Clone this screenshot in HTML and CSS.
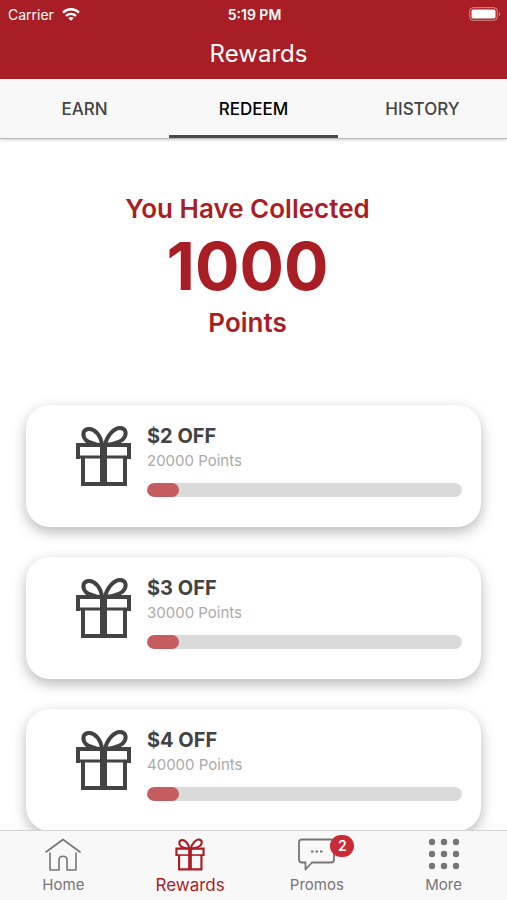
FILE: index.html
```html
<!DOCTYPE html>
<html lang="en">
<head>
    <meta charset="UTF-8">
    <meta name="viewport" content="width=device-width, initial-scale=1.0">
    <title>Rewards</title>
    <link rel="stylesheet" href="styles.css">
</head>
<body>

    <!-- Shared icon -->
    <svg class="icon-defs" width="0" height="0" aria-hidden="true">
        <symbol id="gift" viewBox="0 0 55 62">
            <g fill="none" stroke="currentColor">
                <path class="gift-line" d="M2 34V20H53V34 M7 32V59H49V32"/>
                <path class="gift-edge" d="M2 32H53"/>
                <path class="gift-line" d="M26 20C25 10 18 3 12 4C6 5 6 12 11 16C14 18 19 19 23 20"/>
                <path class="gift-line" d="M29 20C31 10 39 2 45 3C51 4 51 11 46 15C42 18 36 19 31 20"/>
            </g>
            <path fill="currentColor" d="M24 18H31V60H24Z"/>
        </symbol>
    </svg>

    <header class="app-header">
        <div class="status-bar">
            <div class="carrier">
                <span>Carrier</span>
                <svg width="18" height="13" viewBox="0 0 18 13" fill="none" stroke="currentColor" stroke-width="2.400">
                    <path d="M1 4.600C5.500 .2 12.500 .2 17 4.600"/>
                    <path d="M4 7.900C7 5.200 11 5.200 14 7.900"/>
                    <path d="M6.300 10C8 8.700 10 8.700 11.700 10L9 12.800Z" fill="currentColor" stroke="none"/>
                </svg>
            </div>
            <span class="time">5:19 PM</span>
            <svg class="battery" width="32" height="14" viewBox="0 0 32 14">
                <rect x=".7" y=".7" width="27.600" height="12.600" rx="3.500" fill="none" stroke="currentColor" stroke-opacity=".5"/>
                <rect x="2.500" y="2.500" width="24" height="9" rx="1.500" fill="currentColor"/>
                <path d="M30 5C31.500 5.500 31.500 8.500 30 9Z" fill="currentColor" fill-opacity=".5"/>
            </svg>
        </div>
        <h1>Rewards</h1>
    </header>

    <nav class="tabs">
        <a href="#earn">EARN</a>
        <a href="#redeem" class="active">REDEEM</a>
        <a href="#history">HISTORY</a>
    </nav>

    <main class="content">
        <section class="summary">
            <p class="summary-text">You Have Collected</p>
            <p class="summary-points">1000</p>
            <p class="summary-text">Points</p>
        </section>

        <section class="rewards">
            <article class="card">
                <svg class="card-icon"><use href="#gift"/></svg>
                <div class="card-body">
                    <h2>$2 OFF</h2>
                    <p>20000 Points</p>
                    <progress value="10" max="100" aria-label="$2 OFF progress"></progress>
                </div>
            </article>
            <article class="card">
                <svg class="card-icon"><use href="#gift"/></svg>
                <div class="card-body">
                    <h2>$3 OFF</h2>
                    <p>30000 Points</p>
                    <progress value="10" max="100" aria-label="$3 OFF progress"></progress>
                </div>
            </article>
            <article class="card">
                <svg class="card-icon"><use href="#gift"/></svg>
                <div class="card-body">
                    <h2>$4 OFF</h2>
                    <p>40000 Points</p>
                    <progress value="10" max="100" aria-label="$4 OFF progress"></progress>
                </div>
            </article>
        </section>
    </main>

    <nav class="bottom-nav">
        <a href="#home">
            <svg width="36" height="33" viewBox="0 0 36 33" fill="none" stroke="currentColor" stroke-width="1.600" stroke-linecap="round" stroke-linejoin="round">
                <path d="M1 14L18 1.500L35 14"/>
                <path d="M5 15V32H14V22C14 17 22 17 22 22V32H31V15"/>
            </svg>
            <span>Home</span>
        </a>
        <a href="#rewards" class="active">
            <svg width="30" height="33"><use href="#gift"/></svg>
            <span>Rewards</span>
        </a>
        <a href="#promos">
            <div class="promo-icon">
                <svg width="37" height="33" viewBox="0 0 37 33" fill="none" stroke="currentColor" stroke-width="1.800" stroke-linejoin="round">
                    <path d="M4 1.500H33Q36 1.500 36 4.500V21.500Q36 24.500 33 24.500H14L7.500 31.500V24.500H4Q1 24.500 1 21.500V4.500Q1 1.500 4 1.500Z"/>
                    <path d="M13 13.500H15.500M17.500 13.500H20M22 13.500H24.500" stroke-width="2.200"/>
                </svg>
                <span class="badge">2</span>
            </div>
            <span>Promos</span>
        </a>
        <a href="#more">
            <svg width="32" height="33" viewBox="0 0 32 33" fill="currentColor">
                <circle cx="4" cy="4" r="3.200"/><circle cx="16" cy="4" r="3.200"/><circle cx="28" cy="4" r="3.200"/>
                <circle cx="4" cy="16" r="3.200"/><circle cx="16" cy="16" r="3.200"/><circle cx="28" cy="16" r="3.200"/>
                <circle cx="4" cy="28" r="3.200"/><circle cx="16" cy="28" r="3.200"/><circle cx="28" cy="28" r="3.200"/>
            </svg>
            <span>More</span>
        </a>
    </nav>

</body>
</html>
```

FILE: styles.css
```css
* {
    box-sizing: border-box;
}

body {
    font-family: 'Inter', 'Liberation Sans', sans-serif;
    margin: 0;
    height: 100vh;
    display: flex;
    flex-direction: column;
    background: #fff;
    color: #434343;
}

h1, h2, p {
    margin: 0;
}

a {
    color: inherit;
    text-decoration: none;
}

.icon-defs {
    position: absolute;
}

.gift-line {
    stroke-width: 4px;
}

.gift-edge {
    stroke-width: 3px;
}

/* Header */
.app-header {
    background: #a91e25;
    color: #fff;
}

.status-bar {
    display: grid;
    grid-template-columns: 1fr auto 1fr;
    align-items: center;
    height: 28px;
    padding: 0 6px 0 8px;
    font-size: 14px;
}

.carrier {
    display: flex;
    align-items: center;
    gap: 8px;
}

.time {
    font-weight: 600;
}

.battery {
    justify-self: end;
}

.app-header h1 {
    padding-left: 10px;
    font-size: 24px;
    font-weight: 400;
    line-height: 51px;
    text-align: center;
}

/* Tabs */
.tabs {
    display: flex;
    position: relative;
    background: #f8f8f8;
    border-bottom: 1px solid #b8b8b8;
    box-shadow: 0 1px 3px rgba(0, 0, 0, 0.2);
}

.tabs a {
    flex: 1;
    height: 59px;
    border-bottom: 3px solid transparent;
    font-size: 17px;
    font-weight: 500;
    line-height: 60px;
    text-align: center;
}

.tabs .active {
    border-color: #4a4a4a;
    color: #000;
}

/* Points summary */
.content {
    flex: 1;
    min-height: 0;
    overflow: hidden;
}

.summary {
    padding: 52px 12px 0 0;
    color: #a91e25;
    text-align: center;
}

.summary-text {
    font-size: 26px;
    font-weight: 600;
    line-height: 36px;
}

.summary-points {
    font-size: 66px;
    font-weight: 700;
    line-height: 78px;
}

/* Reward cards */
.rewards {
    display: flex;
    flex-direction: column;
    gap: 30px;
    padding: 64px 26px 30px;
}

.card {
    display: flex;
    gap: 16px;
    padding: 20px 19px 30px 50px;
    border-radius: 24px;
    background: #fff;
    box-shadow: 0 5px 14px rgba(0, 0, 0, 0.28);
}

.card-icon {
    width: 55px;
    height: 62px;
}

.card-body {
    flex: 1;
}

.card h2 {
    font-size: 20px;
    font-weight: 700;
    line-height: 22px;
}

.card p {
    margin-bottom: 8px;
    color: #aaa;
    font-size: 15px;
    line-height: 28px;
}

.card progress {
    display: block;
    width: 100%;
    height: 14px;
    border: none;
    border-radius: 7px;
    background: #dadada;
    overflow: hidden;
    appearance: none;
}

.card progress::-webkit-progress-bar {
    background: #dadada;
}

.card progress::-webkit-progress-value {
    border-radius: 7px;
    background: #c55c60;
}

/* Bottom navigation */
.bottom-nav {
    display: flex;
    position: relative;
    height: 70px;
    padding-top: 7px;
    border-top: 1px solid #d4d4d4;
    background: #f8f8f8;
    color: #757575;
}

.bottom-nav a {
    flex: 1;
    display: flex;
    flex-direction: column;
    align-items: center;
    gap: 4px;
    font-size: 15px;
    line-height: 20px;
}

.bottom-nav .active {
    color: #a91e25;
    font-size: 17px;
}

.promo-icon {
    position: relative;
    height: 33px;
}

.badge {
    position: absolute;
    top: -3px;
    right: -19px;
    width: 24px;
    height: 22px;
    border-radius: 11px;
    background: #cb2b37;
    color: #fff;
    font-size: 14px;
    font-weight: 600;
    line-height: 22px;
    text-align: center;
}
```
